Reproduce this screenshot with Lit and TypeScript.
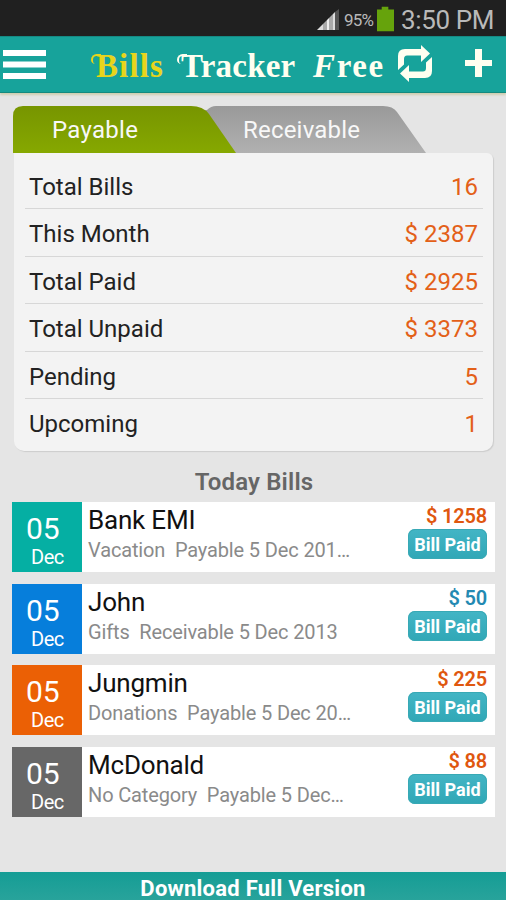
import { LitElement, html, css } from "lit";
import { customElement } from "lit/decorators.js";

@customElement("status-bar")
class StatusBar extends LitElement {
  static styles = css`
    :host { display: flex; align-items: center; height: 36px; box-sizing: border-box; background: #202020; color: #b9b9b9; padding: 3px 12px 0 317px; }
    .signal { width: 23px; height: 22px; flex: none; }
    .percent { font-size: 17px; letter-spacing: -0.8px; margin-left: 4px; width: 33px; flex: none; }
    .battery { width: 17px; height: 26px; margin-top: -1px; flex: none; }
    .time { font-size: 26px; line-height: 30px; margin-left: auto; white-space: nowrap; letter-spacing: -0.4px; }
  `;
  render() {
    return html`
      <svg class="signal" viewBox="0 0 23 22">
        <path d="M0 21 6 15V21Z" fill="#ddd" /><path d="M6 15 10 11V21H6Z" fill="#aaa" />
        <path d="M10 11 12 9V21H10Z" fill="#eee" /><path d="M12 9 16 5V21H12Z" fill="#aaa" />
        <path d="M16 5 18 3V21H16Z" fill="#ddd" /><path d="M18 3 22 0V21H18Z" fill="#555" />
      </svg>
      <span class="percent">95%</span>
      <svg class="battery" viewBox="0 0 18 26"><path d="M5 0H12V3H18V26H0V3H5Z" fill="#66a30c" /></svg>
      <span class="time">3:50 PM</span>
    `;
  }
}

@customElement("title-bar")
class TitleBar extends LitElement {
  static styles = css`
    :host { display: flex; align-items: center; height: 57px; box-sizing: border-box; background: #17a39b; border-top: 1px solid #168a84; border-bottom: 1px solid #158a80; box-shadow: 0 2px 2px #cfceb0; position: relative; }
    .menu { width: 43px; height: 30px; margin: -1px 0 0 3px; flex: none; }
    .title { display: flex; margin: 3px 0 0 45px; width: 307px; font: bold 33px/40px "Liberation Serif", serif; color: #fffff0; white-space: nowrap; flex: none; }
    .bills, .tracker { position: relative; box-sizing: border-box; }
    .bills { color: #e8d51c; width: 86px; padding-left: 5px; letter-spacing: 1.1px; }
    .tracker { width: 136px; padding-left: 4px; letter-spacing: 0.2px; }
    .bills::before, .tracker::before { content: ""; position: absolute; left: 0; top: 8px; width: 10px; height: 10px; box-sizing: border-box; border: solid currentColor; border-width: 2px 0 0 2px; border-radius: 8px 0 0 6px; }
    .free { letter-spacing: 1.6px; }
    .initial { font-style: italic; }
    .sync { width: 34px; height: 37px; margin: -3px 0 0 0; flex: none; }
    .add { width: 27px; height: 28px; margin: -3px 0 0 33px; flex: none; }
  `;
  render() {
    return html`
      <svg class="menu" viewBox="0 0 43 30" fill="#fff"><path d="M0 1H43V7H0ZM0 12.5H43V18.5H0ZM0 24H43V30H0Z" /></svg>
      <h1 class="title">
        <span class="bills">Bills</span><span class="tracker">Tracker</span><span class="free"><span class="initial">F</span>ree</span>
      </h1>
      <svg class="sync" viewBox="0 0 34 37" fill="#fffff0">
        <path d="M0 25V11Q0 4 7 4H23V0L32 8.500 23 17V10.500H9Q6 10.500 6 14V19.500Z" />
        <path d="M34 12V26Q34 33 27 33H11V37L2 28.500 11 20V26.500H25Q28 26.500 28 23V17.500Z" />
      </svg>
      <svg class="add" viewBox="0 0 27 28" fill="#fffff0"><path d="M10 0H17V11H27V17H17V28H10V17H0V11H10Z" /></svg>
    `;
  }
}

@customElement("tab-strip")
class TabStrip extends LitElement {
  static styles = css`
    :host { display: grid; grid-template-columns: 1fr; height: 47px; margin: 13px 0 0 13px; width: 413px; }
    .shape { grid-area: 1 / 1; width: 413px; height: 47px; }
    .labels { grid-area: 1 / 1; display: flex; font-size: 24px; line-height: 49px; color: #f8f8f8; z-index: 1; padding-left: 39px; }
    .first { width: 191px; letter-spacing: 0.3px; }
    .second { letter-spacing: 0.2px; }
  `;
  render() {
    return html`
      <svg class="shape" viewBox="0 0 413 47">
        <defs>
          <linearGradient id="green" x2="0" y2="1"><stop stop-color="#779500" /><stop offset="1" stop-color="#86a800" /></linearGradient>
          <linearGradient id="grey" x2="0" y2="1"><stop stop-color="#999" /><stop offset="1" stop-color="#b1b1b1" /></linearGradient>
        </defs>
        <path d="M185 47V5L194 4Q198 0 203 0H370Q380 0 384 6L413 47Z" fill="url(#grey)" />
        <path d="M0 47V10Q0 0 10 0H178Q190 0 196 8L223 47Z" fill="url(#green)" />
      </svg>
      <div class="labels"><span class="first">Payable</span><span class="second">Receivable</span></div>
    `;
  }
}

@customElement("summary-panel")
class SummaryPanel extends LitElement {
  static styles = css`
    :host { display: block; box-sizing: border-box; height: 298px; margin: 0 13px 0 14px; padding: 9px 10px 0 11px; background: #f3f3f3; border-radius: 0 6px 10px 10px; box-shadow: 1px 1px 1px #ccc; }
    .row { display: flex; justify-content: space-between; box-sizing: border-box; height: 47.4px; padding: 0 5px 0 4px; border-bottom: 1px solid #d7d7d7; font-size: 24px; line-height: 50px; color: #222; }
    .row:last-child { border: 0; }
    .value { color: #e36018; }
  `;
  rows = [["Total Bills", "16"], ["This Month", "$ 2387"], ["Total Paid", "$ 2925"], ["Total Unpaid", "$ 3373"], ["Pending", "5"], ["Upcoming", "1"]];
  render() {
    return this.rows.map(([label, value]) => html`<div class="row"><span>${label}</span><span class="value">${value}</span></div>`);
  }
}

@customElement("bill-card")
class BillCard extends LitElement {
  static properties = { name: {}, detail: {}, amount: {}, tone: {} };
  declare name: string;
  declare detail: string;
  declare amount: string;
  declare tone: string;
  static styles = css`
    :host { display: flex; height: 70px; background: #fff; }
    .date { width: 70px; flex: none; color: #fff; display: flex; flex-direction: column; box-sizing: border-box; }
    .teal { background: #05afa3; }
    .blue { background: #067edb; }
    .orange { background: #eb6005; }
    .grey { background: #676767; }
    .day { font-size: 30px; line-height: 35px; padding: 9px 0 0 14px; }
    .month { font-size: 20px; line-height: 23px; padding-left: 19px; letter-spacing: -0.5px; }
    .info { flex: 1; min-width: 0; padding: 3px 0 0 6px; white-space: pre; }
    .name { font-size: 26px; line-height: 30px; color: #111; letter-spacing: -0.2px; }
    .detail { font-size: 20px; line-height: 30px; color: #8a8a8a; letter-spacing: -0.14px; }
    .side { width: 90px; flex: none; display: flex; flex-direction: column; align-items: flex-end; padding-right: 8px; }
    .amount { font-size: 20px; font-weight: 600; line-height: 27px; color: #df570f; letter-spacing: -0.2px; white-space: nowrap; margin-top: 1px; }
    .received { color: #2389b2; }
    .paid { width: 79px; height: 30px; margin-top: -1px; border-radius: 7px; background: linear-gradient(#43b5c5, #30a7b6); box-shadow: inset 0 0 0 1px #38a9b5; color: #fff; font-size: 18px; font-weight: 700; line-height: 31px; text-align: center; white-space: nowrap; }
  `;
  render() {
    return html`
      <div class="date ${this.tone}"><span class="day">05</span><span class="month">Dec</span></div>
      <div class="info"><div class="name">${this.name}</div><div class="detail">${this.detail}</div></div>
      <div class="side"><div class="amount ${this.tone === "blue" ? "received" : ""}">${this.amount}</div><div class="paid">Bill Paid</div></div>
    `;
  }
}

@customElement("app-root")
class AppRoot extends LitElement {
  static styles = css`
    :host { display: flex; flex-direction: column; width: 506px; height: 900px; overflow: hidden; background: #e5e5e5; font-family: Roboto, sans-serif; }
    .heading { margin: 0; height: 51px; padding: 0 0 0 2px; font-size: 24px; font-weight: 600; line-height: 62px; letter-spacing: 0.15px; text-align: center; color: #666; }
    .cards { display: flex; flex-direction: column; gap: 11.6px; margin: 0 11px 0 12px; }
    .download { margin-top: auto; height: 28px; box-sizing: border-box; background: linear-gradient(#159d95, #28a39b); color: #fff; font-size: 22px; font-weight: 700; line-height: 33px; letter-spacing: 0.25px; text-align: center; white-space: nowrap; }
  `;
  bills = [
    ["Bank EMI", "Vacation  Payable 5 Dec 201…", "$ 1258", "teal"],
    ["John", "Gifts  Receivable 5 Dec 2013", "$ 50", "blue"],
    ["Jungmin", "Donations  Payable 5 Dec 20…", "$ 225", "orange"],
    ["McDonald", "No Category  Payable 5 Dec…", "$ 88", "grey"],
  ];
  render() {
    return html`
      <status-bar></status-bar>
      <title-bar></title-bar>
      <tab-strip></tab-strip>
      <summary-panel></summary-panel>
      <h2 class="heading">Today Bills</h2>
      <div class="cards">
        ${this.bills.map(([name, detail, amount, tone]) => html`<bill-card .name=${name} .detail=${detail} .amount=${amount} .tone=${tone}></bill-card>`)}
      </div>
      <div class="download">Download Full Version</div>
    `;
  }
}
